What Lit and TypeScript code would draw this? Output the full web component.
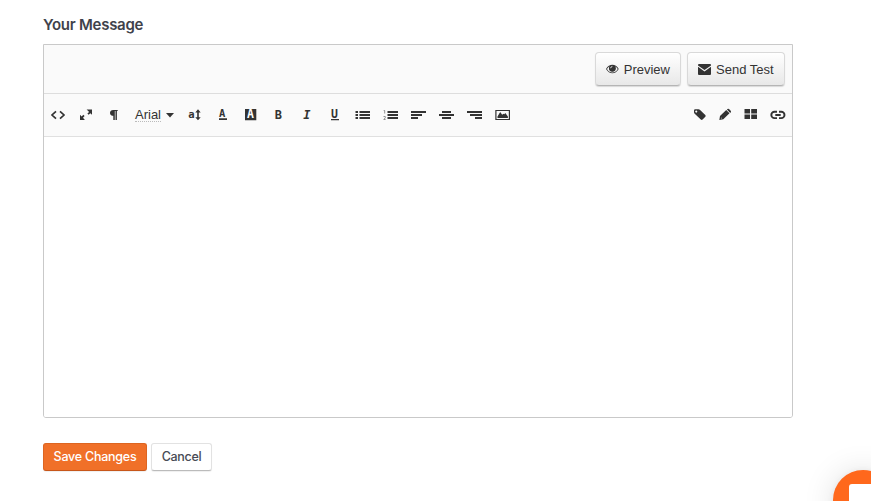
import { LitElement, html, css, svg } from "lit";
import { customElement } from "lit/decorators.js";

const glyph = (w: number, body: unknown) =>
  html`<button class="tool"><svg width=${w} height="22" viewBox="0 0 ${w} 22">${body}</svg></button>`;

const code = svg`<path class="line" d="M12 7.3 8 11l4 3.7M16 7.3l4 3.7-4 3.7"/>`;
const expand = svg`<path d="M14.6 5.5H20v5.3l-1.7-1.6-1.7 1.6-1.2-1.2 1.7-1.7zM8 10.8l1.7 1.6 1.6-1.6 1.3 1.3-1.6 1.6 1.9 2.3H8z"/>`;
const pilcrow = svg`<path d="M13.2 6h4.5v1.1h-.8V16h-1.4V7.1h-.7V16h-1.5v-4.2c-2 0-3.3-1.2-3.3-2.9C10 7 11.300 6 13.200 6z"/>`;
const size = svg`<text x="8.2" y="14" font-size="10.5">a</text><path d="M18 5.3 20.7 8.5H18.8v4.8h1.9L18 16.3l-2.7-3h1.900V8.500h-1.900z"/>`;
const color = svg`<text x="11" y="13" font-family="DejaVu Sans" font-size="10.5">A</text><path d="M11 14.300h8V16h-8z"/>`;
const back = svg`<path d="M9 5h11.300v11.300H9z"/><text class="rev" x="11.100" y="14.300" font-size="11.500">A</text>`;
const bold = svg`<text x="10.7" y="14.700" font-size="12">B</text>`;
const italic = svg`<text class="slant" x="11.3" y="14.700" font-size="12">I</text>`;
const under = svg`<text x="10.9" y="13.500" font-size="11.500">U</text><path d="M11 15h8v1.200h-8z"/>`;
const bullets = svg`<path d="M7.5 7H10v2H7.5zM11.5 7H22v2H11.5zM7.5 10H10v2H7.5zM11.5 10H22v2H11.5zM7.5 13H10v2H7.5zM11.5 13H22v2H11.5z"/>`;
const numbers = svg`<path d="M11.5 7H22v2H11.5zM11.5 10H22v2H11.5zM11.5 13H22v2H11.5z"/><path class="thin" d="M7.7 6.5h1v3M7.5 12.500H9.300v1.300L7.800 15.500h1.800"/>`;
const left = svg`<path d="M7 7h15v2H7zM7 10h11v2H7zM7 13h7v2H7z"/>`;
const center = svg`<path d="M10 7h9v2h-9zM7 10h15v2H7zM10 13h9v2h-9z"/>`;
const right = svg`<path d="M7 7h15v2H7zM10 10h12v2H10zM15 13h7v2h-7z"/>`;
const image = svg`<path fill-rule="evenodd" d="M7.3 6H22v10H7.300zM8.500 7.100v7.800h12.300V7.100z"/><path d="M9.500 14v-1.500l2.700-4.400 2 2.700 1.200-1 .9.500 1-1.300 2.600 3.500V14z"/>`;
const tag = svg`<path fill-rule="evenodd" d="M7 6.6q0-1.300 1.300-1.300h3.200q.9 0 1.600.7l5.200 5q.9.900 0 1.800l-2.700 2.700q-.9.900-1.800 0L7.700 9.700Q7 9 7 8.200zM9.200 6.500a1 1 0 1 0 .1 0z"/>`;
const pencil = svg`<path fill-rule="evenodd" d="M6.300 16l.7-4 6.200-6.100 3.300 3.300-6.200 6.100zM7.900 14.500l1.200-.2-.9-.9z"/><path d="M13.900 5.500l.6-.5q.8-.5 1.500.1l1.700 1.700q.7.800.1 1.500l-.6.600z"/>`;
const grid = svg`<path d="M5.500 5H11v4.500H5.500zM12.200 5H18v4.500h-5.800zM5.500 10.500H11V15H5.500zM12.200 10.500H18V15h-5.800z"/>`;
const link = svg`<path class="line heavy" d="M12 7.700H9.500a3.200 3.200 0 0 0 0 6.400H12M14 7.700h2.300a3.200 3.200 0 0 1 0 6.400H14M10.300 11h5.400"/>`;

@customElement("app-root")
export class AppRoot extends LitElement {
  static styles = css`
    :host { display: block; position: relative; height: 501px; overflow: hidden; background: #fff; font-family: "Liberation Sans", Arial, sans-serif; color: #333; }
    * { box-sizing: border-box; }
    button { font: inherit; color: inherit; margin: 0; padding: 0; white-space: nowrap; }
    svg { display: block; fill: #333; }
    .form { padding: 15px 0 0 43px; }
    h1 { margin: 0; height: 29px; font: 600 15px/20px Inter, sans-serif; letter-spacing: -0.26px; color: #3f424b; }
    .editor { width: 750px; height: 374px; border: 1px solid #c9c9c9; border-radius: 0 0 3px 3px; display: flex; flex-direction: column; overflow: hidden; }
    .actions { height: 49px; background: #fafafa; border-bottom: 1px solid #ddd; display: flex; justify-content: flex-end; gap: 6px; padding: 7px 7px 0; }
    .push { height: 34px; border: 1px solid #d9d9d9; border-bottom-color: #b5b5b5; border-radius: 4px; background: linear-gradient(#fff, #e8e8e8); box-shadow: 0 1px 1px #0002; font-size: 13px; display: flex; align-items: center; gap: 5px; padding: 0 10px; }
    .preview { width: 86px; }
    .send { width: 98px; }
    .tools { height: 43px; background: #fafafa; border-bottom: 1px solid #e0e0e0; display: flex; justify-content: space-between; padding: 10px 1px 0 0; }
    .group { display: flex; height: 22px; }
    .tool { border: 0; background: none; display: block; }
    .tool text { font-family: "DejaVu Sans Mono", monospace; font-weight: 700; }
    .tool .rev { fill: #fff; }
    .tool .slant { font-style: italic; }
    .line { fill: none; stroke: #333; stroke-width: 1.7; }
    .heavy { stroke-width: 1.9; }
    .thin { fill: none; stroke: #777; stroke-width: 0.8; }
    .font { width: 52px; border: 0; background: none; display: flex; align-items: center; gap: 5px; padding-left: 7px; font-size: 13px; }
    .font span { height: 15px; line-height: 15px; border-bottom: 1px dotted #bbb; margin-top: -1px; }
    .body { flex: 1; background: #fff; }
    .buttons { display: flex; gap: 4px; padding-top: 25px; }
    .save, .cancel { height: 28px; border-radius: 3px; font: 500 12.5px/24px Inter, sans-serif; box-shadow: 0 1px 1px #0001; }
    .save { width: 104px; color: #fff; background: #f07028; border: 1px solid #dd6521; border-bottom-color: #c7561a; letter-spacing: -0.24px; }
    .cancel { width: 61px; color: #484b55; background: #fff; border: 1px solid #e2e2e2; border-bottom-color: #bbb; letter-spacing: -0.3px; }
    .chat { position: absolute; left: 833px; top: 470px; width: 60px; height: 60px; border-radius: 50%; background: #ff681c; box-shadow: 0 1px 6px #0001, 0 2px 32px #0002; padding: 14px 0 0 16px; }
    .bubble { width: 28px; height: 32px; border-radius: 3px; background: #fff; }
  `;

  render() {
    return html`
      <main class="form">
        <h1>Your Message</h1>
        <section class="editor">
          <div class="actions">
            <button class="push preview">
              <svg width="13" height="12" viewBox="0 0 13 12"><path fill-rule="evenodd" d="M0 6C3.300.300 9.700.300 13 6 9.700 11.700 3.300 11.700 0 6zM1 6C2.500 8.700 4.500 9.600 6.500 9.600S10.500 8.700 12 6Q11 4.200 9.300 3.100 10 4 10 5.200A3.500 3.500 0 0 1 3 5.200Q3 4 3.700 3.100 2 4.200 1 6z"/><circle cx="6.500" cy="5.200" r="3"/><path class="rev" d="M4.700 5.200Q4.800 3.500 6.500 3.400" fill="none" stroke="#fff" stroke-width=".8"/></svg>
              Preview
            </button>
            <button class="push send">
              <svg width="13" height="12" viewBox="0 0 13 12"><path d="M0 2q0-1 1-1h11q1 0 1 1v.4L6.500 7 0 2.400zM0 3.800l6.500 4.600L13 3.800V11q0 1-1 1H1q-1 0-1-1z"/></svg>
              Send Test
            </button>
          </div>
          <div class="tools">
            <div class="group">
              ${[code, expand, pilcrow].map((i) => glyph(28, i))}
              <button class="font"><span>Arial</span><svg width="8" height="5" viewBox="0 0 8 5"><path d="M0 0h8L4 4.500z"/></svg></button>
              ${[size, color, back, bold, italic, under, bullets, numbers, left, center, right, image].map((i) => glyph(28, i))}
            </div>
            <div class="group">${[tag, pencil, grid, link].map((i) => glyph(26, i))}</div>
          </div>
          <div class="body"></div>
        </section>
        <div class="buttons">
          <button class="save">Save Changes</button>
          <button class="cancel">Cancel</button>
        </div>
      </main>
      <div class="chat"><div class="bubble"></div></div>
    `;
  }
}
